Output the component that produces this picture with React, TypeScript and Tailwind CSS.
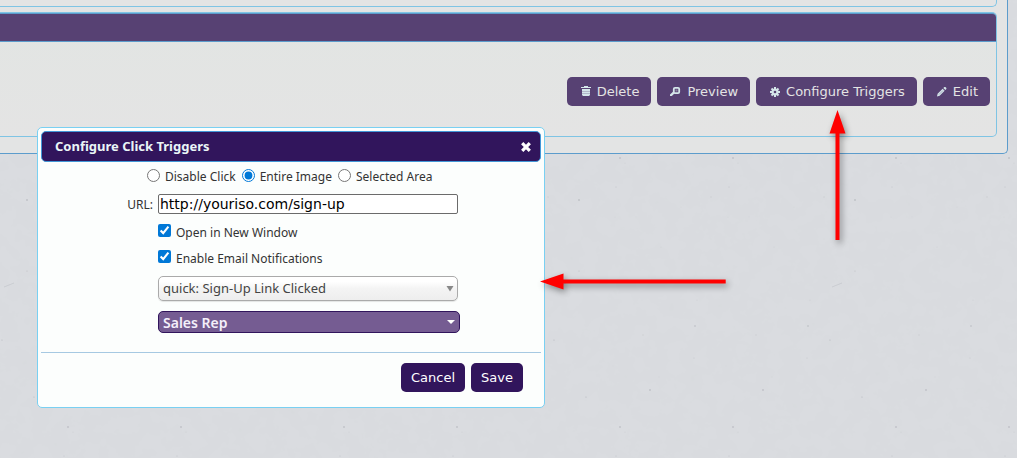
import { useState } from "react"
import type { ReactNode } from "react"

// Speckles of the concrete tile: x, y, radius, opacity
const specks = [
  [8, 3, 0.7, 0.4],
  [13, 8, 0.5, 0.15],
  [4, 32, 0.5, 0.25],
  [24, 62, 0.4, 0.1],
  [69, 52, 0.4, 0.15],
  [99, 42, 0.7, 0.1],
  [3, 62, 0.4, 0.15],
  [49, 92, 0.6, 0.1],
  [99, 84, 0.4, 0.12],
  [85, 145, 0.5, 0.15],
  [83, 171, 0.7, 0.35],
  [31, 180, 0.8, 0.1],
  [82, 203, 0.5, 0.2],
  [47, 222, 0.5, 0.1],
  [38, 235, 0.7, 0.4],
  [1, 211, 0.4, 0.12],
]

function ConcreteBackground() {
  return (
    <svg className="absolute inset-0 h-full w-full" aria-hidden="true">
      <defs>
        <filter id="grain" x="0" y="0" width="100%" height="100%">
          <feTurbulence type="fractalNoise" baseFrequency="0.06" numOctaves="4" seed="7" />
          <feColorMatrix values="0 0 0 0 0.6  0 0 0 0 0.62  0 0 0 0 0.64  0.2 0 0 0 -0.06" />
        </filter>
        <pattern id="specks" x="612" y="155" width="276" height="269" patternUnits="userSpaceOnUse">
          {specks.map(([x, y, r, o], i) => (
            <g key={i} fill="#5c5f68" opacity={o}>
              <circle cx={x} cy={y} r={r} />
              <circle cx={x + 113} cy={y} r={r} />
            </g>
          ))}
          <g fill="#5c5f68">
            <circle cx="243" cy="45" r="0.8" opacity="0.35" />
            <circle cx="243" cy="116" r="0.6" opacity="0.25" />
            <circle cx="218" cy="185" r="0.6" opacity="0.3" />
            <circle cx="250" cy="242" r="0.6" opacity="0.3" />
            <path d="M220 132l10-4" stroke="#5c5f68" strokeWidth="0.6" opacity="0.2" />
          </g>
        </pattern>
      </defs>
      <rect width="100%" height="100%" fill="#dadce0" />
      <rect width="100%" height="100%" filter="url(#grain)" />
      <rect width="100%" height="100%" fill="url(#specks)" />
    </svg>
  )
}

function Icon({ children }: { children: ReactNode }) {
  return (
    <svg viewBox="0 0 16 15" className="h-[15px] w-4 shrink-0 fill-[#d5e6ea]" aria-hidden="true">
      {children}
    </svg>
  )
}

function TrashIcon() {
  return (
    <Icon>
      <path d="M3 3h3V2h4v1h3v1H3z" />
      <path d="M4 5h8v6l-1 1H5l-1-1z" />
      <path d="M4 7.500h8M4 9.500h8" stroke="#574173" strokeWidth="0.7" opacity="0.4" />
    </Icon>
  )
}

function SearchIcon() {
  return (
    <Icon>
      <path d="M2 12v-1.500l4-3.700L7.500 8.500 3.800 12z" />
      <rect x="5.800" y="3.800" width="5.400" height="5.400" rx="1.200" fill="#574173" stroke="#d5e6ea" strokeWidth="1.800" />
      <rect x="7.500" y="5.500" width="2" height="2" fill="#8d86a3" />
    </Icon>
  )
}

function GearIcon() {
  return (
    <Icon>
      <path d="M8 3v10M3 8h10M4.500 4.500l7 7M11.500 4.500l-7 7" stroke="#d5e6ea" strokeWidth="2" />
      <circle cx="8" cy="8" r="3.500" />
      <circle cx="8" cy="8" r="1.300" fill="#574173" />
    </Icon>
  )
}

function PencilIcon() {
  return (
    <Icon>
      <path d="M3 12.500l0.600-2.700 5-5 2 2-5 5z" />
      <path d="M9.300 4.100l1.100-1.100h1l1 1v1l-1.100 1.100z" />
      <path d="M5 10.500l4-4" stroke="#574173" strokeWidth="0.600" opacity="0.600" />
    </Icon>
  )
}

function ToolbarButton({ icon, children }: { icon: ReactNode; children: ReactNode }) {
  return (
    <button className="flex h-[29px] items-center gap-[3px] rounded-[5px] bg-[#574173] pr-3 pl-[11px] text-[13px] whitespace-nowrap text-[#e4e4e4]">
      {icon}
      <span>{children}</span>
    </button>
  )
}

function DialogButton({ children }: { children: ReactNode }) {
  return <button className="h-[29px] rounded-[5px] bg-[#31155c] px-[10px] text-[13px] text-white">{children}</button>
}

function Arrows() {
  return (
    <svg className="pointer-events-none absolute inset-0 h-full w-full overflow-visible" aria-hidden="true">
      <g fill="#ff0000" className="drop-shadow-[2px_3px_3px_rgba(0,0,0,0.4)]">
        <path d="M837.500 110l8 23.500h-6V240h-4V133.500h-6z" />
        <path d="M540 281.500l23.500-8v6h162.200v4H563.500v6z" />
      </g>
    </svg>
  )
}

const clickModes = ["Disable Click", "Entire Image", "Selected Area"]
const options = ["Open in New Window", "Enable Email Notifications"]

export default function App() {
  const [mode, setMode] = useState("Entire Image")
  const [url, setUrl] = useState("http://youriso.com/sign-up")

  return (
    <div className="relative min-h-screen overflow-hidden font-['DejaVu_Sans',sans-serif]">
      <ConcreteBackground />

      {/* Page panel */}
      <main className="relative mr-[9px] rounded-br-[5px] border-r border-b border-[#5c9ccc] bg-[#e3e4e4] pr-[10px] pb-4">
        <div className="h-[7px] rounded-br-[5px] border-r border-b border-[#7fc4e4]" />
        <section className="mt-[5px] rounded-r-[5px] border-y border-r border-[#7fc4e4] bg-linear-to-b from-[#e2e5e3] to-[#e4e4e4]">
          <div className="h-[29px] rounded-tr-[4px] border-t border-b border-[#5c9ccc] bg-[#574173]" />
          <div className="flex justify-end gap-[6px] pt-[35px] pr-[6px] pb-[30px]">
            <ToolbarButton icon={<TrashIcon />}>Delete</ToolbarButton>
            <ToolbarButton icon={<SearchIcon />}>Preview</ToolbarButton>
            <ToolbarButton icon={<GearIcon />}>Configure Triggers</ToolbarButton>
            <ToolbarButton icon={<PencilIcon />}>Edit</ToolbarButton>
          </div>
        </section>
      </main>

      {/* Click triggers dialog */}
      <div
        role="dialog"
        aria-labelledby="dialog-title"
        className="absolute top-[127px] left-[37px] w-[508px] rounded-[5px] border border-[#79d0f2] bg-[#fcfefd] p-[3px] font-['Noto_Sans',sans-serif] text-[12px] text-[#333333]"
      >
        <div className="flex h-[31px] items-center justify-between rounded-[5px] border border-[#4297d7] bg-[#31155c] pr-[9px] pl-[13px]">
          <h2 id="dialog-title" className="text-[13px] font-bold text-[#eaf5f7]">
            Configure Click Triggers
          </h2>
          <button aria-label="Close">
            <svg viewBox="0 0 10 10" className="h-[10px] w-[10px]" aria-hidden="true">
              <path d="M1.200 1.200l7.600 7.600M8.800 1.200l-7.600 7.600" stroke="#ffffff" strokeWidth="3.200" />
            </svg>
          </button>
        </div>

        <form onSubmit={(e) => e.preventDefault()}>
          <div className="mt-[5px] flex h-5 items-center gap-[6px] pl-[106px]">
            {clickModes.map((label) => (
              <label key={label} className="flex items-center gap-[5px] whitespace-nowrap">
                <input
                  type="radio"
                  name="mode"
                  className="mb-1 h-[13px] w-[13px] accent-[#0078d7]"
                  checked={mode === label}
                  onChange={() => setMode(label)}
                />
                {label}
              </label>
            ))}
          </div>

          <div className="mt-[7px] flex h-5 items-center">
            <label htmlFor="url" className="w-[117px] pt-[2px] pr-[5px] text-right">
              URL:
            </label>
            <input
              id="url"
              type="text"
              className="h-5 w-[300px] rounded-[2px] border border-[#6b6b6b] bg-white px-px pt-px font-['DejaVu_Sans',sans-serif] text-[14px] text-black"
              value={url}
              onChange={(e) => setUrl(e.target.value)}
            />
          </div>

          <div className="flex flex-col gap-[10px] pl-[117px]">
            <div className="mt-[11px] flex flex-col gap-[11px]">
              {options.map((label) => (
                <label key={label} className="flex h-[15px] items-center gap-[5px]">
                  <input type="checkbox" defaultChecked className="mb-1 h-[13px] w-[13px] accent-[#0078d7]" />
                  {label}
                </label>
              ))}
            </div>

            <div className="relative w-[300px]">
              <select
                aria-label="Notification template"
                className="block h-[25px] w-full appearance-none rounded-[5px] border border-[#aaaaaa] bg-linear-to-b from-white from-20% via-[#f4f4f4] via-50% to-[#eeeeee] px-1 text-[13px] text-[#444444] shadow-[0_1px_1px_rgba(0,0,0,0.1)]"
              >
                <option>quick: Sign-Up Link Clicked</option>
              </select>
              <svg
                viewBox="0 0 8 6"
                className="pointer-events-none absolute top-[10px] right-1 h-[6px] w-2 fill-[#888888]"
                aria-hidden="true"
              >
                <path d="M0.500 0h7L4 5.500z" />
              </svg>
            </div>

            <div className="relative w-[302px]">
              <select
                aria-label="Recipient"
                className="block h-[22px] w-full appearance-none rounded-[5px] border border-[#31155c] bg-[#755c92] px-1 text-[14px] font-semibold text-[#f4effa]"
              >
                <option>Sales Rep</option>
              </select>
              <svg
                viewBox="0 0 8 4"
                className="pointer-events-none absolute top-[9px] right-[5px] h-1 w-2 fill-white"
                aria-hidden="true"
              >
                <path d="M0 0h8L4 4z" />
              </svg>
            </div>
          </div>

          <div className="mt-[19px] flex justify-end gap-[6px] border-t border-[#a6c9e2] pt-[10px] pr-[18px] pb-3 font-['DejaVu_Sans',sans-serif]">
            <DialogButton>Cancel</DialogButton>
            <DialogButton>Save</DialogButton>
          </div>
        </form>
      </div>

      <Arrows />
    </div>
  )
}
